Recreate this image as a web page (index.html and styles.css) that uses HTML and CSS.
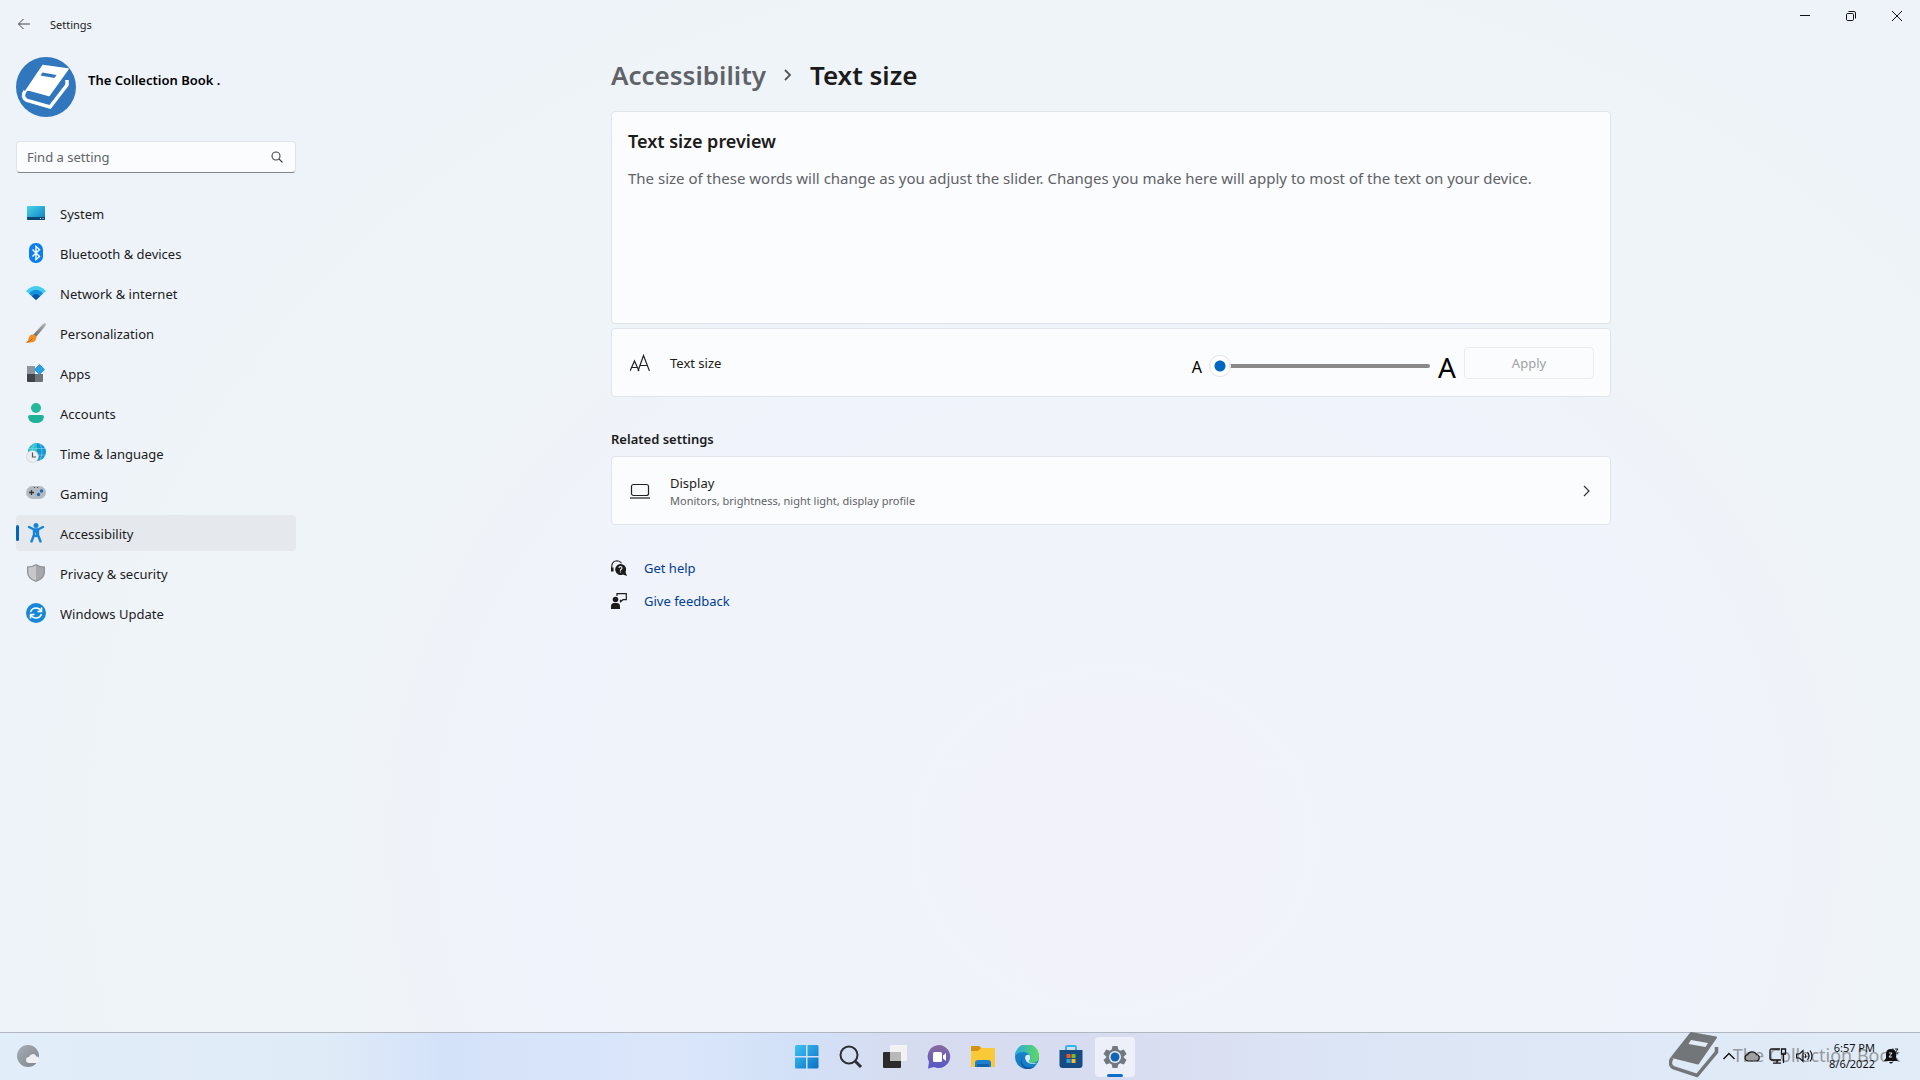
FILE: index.html
```html
<!DOCTYPE html>
<html lang="en">
<head>
  <meta charset="UTF-8">
  <title>Settings</title>
  <link rel="stylesheet" href="styles.css">
</head>
<body>

  <!-- Title bar -->
  <header class="titlebar">
    <button class="back" aria-label="Back">
      <svg width="14" height="12" viewBox="0 0 14 12" fill="none" stroke="#444" stroke-width="1"><path d="M6.500 1 1.500 6l5 5M1.500 6H13"/></svg>
    </button>
    <span class="app-title">Settings</span>
    <div class="window-buttons">
      <button aria-label="Minimize"><svg width="10" height="10" viewBox="0 0 10 10"><path d="M0 4.500h10" stroke="#111"/></svg></button>
      <button aria-label="Restore"><svg width="10" height="10" viewBox="0 0 10 10" fill="none" stroke="#111"><rect x=".5" y="2.500" width="7" height="7" rx="1.200"/><path d="M2.500.5H8q1.500 0 1.500 1.500v5.500"/></svg></button>
      <button aria-label="Close"><svg width="10" height="10" viewBox="0 0 10 10"><path d="M0 0l10 10M10 0 0 10" stroke="#111"/></svg></button>
    </div>
  </header>

  <div class="window">
    <!-- Sidebar -->
    <aside class="sidebar">
      <div class="profile">
        <svg width="60" height="60" viewBox="0 0 60 60">
          <circle cx="30" cy="30" r="30" fill="#3077bd"/>
          <path d="M27 8.500 52 12 33 38.500 13 33 Q11 33 9.500 34.500 Z" fill="#fff" stroke="#fff" stroke-width="1.500" stroke-linejoin="round"/>
          <path d="M26.500 15.500l14 2.500-2 3-14-2.500z" fill="#3077bd"/>
          <path d="M9 34Q5 40 11 43.500L34 50 51 28V23" fill="none" stroke="#fff" stroke-width="3.500"/>
        </svg>
        <strong>The Collection Book .</strong>
      </div>

      <div class="search">
        <input type="text" placeholder="Find a setting" aria-label="Find a setting">
        <svg width="12" height="12" viewBox="0 0 12 12" fill="none" stroke="#444" stroke-width="1.100"><circle cx="5" cy="5" r="4"/><path d="M8 8l3.500 3.500"/></svg>
      </div>

      <nav>
        <a href="#">
          <svg width="20" height="20" viewBox="0 0 20 20"><defs><linearGradient id="gSys" x2="1" y2="1"><stop stop-color="#4bd6e8"/><stop offset="1" stop-color="#0b7cc4"/></linearGradient></defs><rect x="1" y="3" width="18" height="14" rx="1" fill="url(#gSys)"/><path d="M1 14h18v2q0 1-1 1H2q-1 0-1-1z" fill="#0a4a75"/><path d="M14 15.500h1M16.500 15.500h1" stroke="#bfe8ff"/></svg>
          System
        </a>
        <a href="#">
          <svg width="20" height="20" viewBox="0 0 20 20"><rect x="3" width="14" height="20" rx="6.500" fill="#0a7ff2"/><path d="M6.500 6.500l7 7-3.500 3V3.500l3.500 3-7 7" fill="none" stroke="#fff" stroke-width="1.400"/></svg>
          Bluetooth &amp; devices
        </a>
        <a href="#">
          <svg width="20" height="20" viewBox="0 0 20 20"><path d="M0 8Q10-2 20 8L10 17z" fill="#45cdf0"/><path d="M3 10.500Q10 3 17 10.500L10 17z" fill="#1590dc"/><path d="M6 13.200Q10 9 14 13.200L10 17z" fill="#0a55a8"/></svg>
          Network &amp; internet
        </a>
        <a href="#">
          <svg width="20" height="20" viewBox="0 0 20 20"><defs><linearGradient id="gBrush" x1="0" y1="1" x2="1" y2="0"><stop stop-color="#666"/><stop offset="1" stop-color="#b8b8b8"/></linearGradient></defs><path d="M7 12 17 1q2-1.500 3 0 0 1-1 2.500L10 14z" fill="url(#gBrush)"/><path d="M6.500 11.500q3 0 4 3-1 5-5.500 5H.5q2-2 2-4 1-4 4-4z" fill="#f19027"/><path d="M.5 19.500q4-1 6-4" fill="none" stroke="#c75b13"/></svg>
          Personalization
        </a>
        <a href="#">
          <svg width="20" height="20" viewBox="0 0 20 20"><path d="M1 3h8v8H1z" fill="#8f959e"/><path d="M1 11h8v8H2q-1 0-1-1z" fill="#41454a"/><path d="M9 11h8v7q0 1-1 1H9z" fill="#6e737a"/><path d="M13.500 1.500 18.500 6.500 13.500 11.500 8.500 6.500z" fill="#2aa0e4" stroke="#2aa0e4" stroke-linejoin="round"/></svg>
          Apps
        </a>
        <a href="#">
          <svg width="20" height="20" viewBox="0 0 20 20"><circle cx="10" cy="5" r="5" fill="#24b99c"/><path d="M4 12h12q2 0 2 2-1 6-8 6t-8-6q0-2 2-2z" fill="#1fb298"/></svg>
          Accounts
        </a>
        <a href="#">
          <svg width="20" height="20" viewBox="0 0 20 20"><circle cx="11" cy="9" r="9" fill="#1694d2"/><path d="M11 0a9 9 0 0 0-9 9h9z" fill="#2fc4c8"/><path d="M3 5.500h16M3 12h16M8 1Q4 9 8 17M14 1q4 8 0 16" fill="none" stroke="#6fd5ec" stroke-width=".7"/><circle cx="6.500" cy="13.500" r="6" fill="#eceef0" stroke="#c3c8cd" stroke-width=".6"/><path d="M6.500 9.500V14H10" fill="none" stroke="#555" stroke-width="1.200"/></svg>
          Time &amp; language
        </a>
        <a href="#">
          <svg width="20" height="20" viewBox="0 0 20 20"><rect y="3" width="20" height="13" rx="6.500" fill="#b4bac1"/><path d="M5.500 7v5M3 9.500h5" stroke="#333" stroke-width="1.300"/><circle cx="15.500" cy="8" r="1.700" fill="#1f68b8"/><circle cx="12.500" cy="11.500" r="1.700" fill="#1f68b8"/><path d="M8 4.500h1M11 4.500h1" stroke="#444"/></svg>
          Gaming
        </a>
        <a href="#" class="selected" aria-current="page">
          <svg width="20" height="20" viewBox="0 0 20 20" fill="none" stroke="#1583d8" stroke-linecap="round" stroke-linejoin="round"><circle cx="10" cy="2.500" r="2.500" fill="#1583d8" stroke="none"/><path d="M3 4l5 2.500h4L17 4" stroke-width="2.400"/><path d="M8 7.500h4V12l2.500 6.500M8 7.500V12L5.500 18.500M8 12l2 1 2-1" fill="#1583d8" stroke-width="2.400"/></svg>
          Accessibility
        </a>
        <a href="#">
          <svg width="20" height="20" viewBox="0 0 20 20"><path d="M10 1q4 2.500 9 2.500V9q0 7-9 10-9-3-9-10V3.500Q6 3.500 10 1z" fill="#8c8f94"/><path d="M10 2.300v15.500Q2.200 15 2.200 9V4.500Q6.500 4.500 10 2.300z" fill="#c5c7ca"/><path d="M10 2.300v15.500q7.800-2.800 7.800-8.800V4.500Q13.500 4.500 10 2.300z" fill="#a5a7ab"/></svg>
          Privacy &amp; security
        </a>
        <a href="#">
          <svg width="20" height="20" viewBox="0 0 20 20" fill="none" stroke="#fff" stroke-width="1.600"><circle cx="10" cy="10" r="10" fill="#1687d9" stroke="none"/><path d="M4.500 9Q6 5 10 5q3.500 0 5 3M15.500 4.500V8.500h-4M15.500 11q-1.500 4-5.500 4-3.500 0-5-3M4.500 15.500v-4h4"/></svg>
          Windows Update
        </a>
      </nav>
    </aside>

    <!-- Page -->
    <main>
      <div class="content">
        <h1><a href="#">Accessibility</a>
          <svg width="8" height="12" viewBox="0 0 8 12" fill="none" stroke="#555" stroke-width="1.800"><path d="M1 1l5 5-5 5"/></svg>
          <span>Text size</span></h1>

        <section class="card preview">
          <h2>Text size preview</h2>
          <p>The size of these words will change as you adjust the slider. Changes you make here will apply to most of the text on your device.</p>
        </section>

        <section class="card row">
          <svg width="20" height="20" viewBox="0 0 20 20" fill="none" stroke="#222" stroke-width="1.200"><path d="M0 18 4.500 8 9 18M1.500 14.500h6M8 18 13.500 2.500 19.500 18M10 12.500h7.500"/></svg>
          <label for="textSize">Text size</label>
          <div class="slider">
            <span class="small-a">A</span>
            <input type="range" id="textSize" min="100" max="225" value="100">
            <span class="large-a">A</span>
          </div>
          <button class="apply" disabled>Apply</button>
        </section>

        <h3>Related settings</h3>
        <a href="#" class="card row">
          <svg width="20" height="20" viewBox="0 0 20 20" fill="none" stroke="#222" stroke-width="1.200"><rect x="1.500" y="3.500" width="17" height="11" rx="2"/><path d="M0 17h20"/></svg>
          <span class="row-text">Display<small>Monitors, brightness, night light, display profile</small></span>
          <svg width="8" height="12" viewBox="0 0 8 12" fill="none" stroke="#333" stroke-width="1.200"><path d="M1 1l5 5-5 5"/></svg>
        </a>

        <div class="links">
          <a href="#">
            <svg width="16" height="16" viewBox="0 0 16 16"><path d="M1 10.500Q-.5 1 6 .8q3 0 4.500 2.500M0 8h2v3H0z" fill="none" stroke="#1b1b1b" stroke-width="1.100"/><path d="M9.500 4a5.500 5.500 0 0 1 5 8l1.500 4-4-1.500A5.500 5.500 0 1 1 9.500 4z" fill="#1b1b1b"/><path d="M8 8q0-1.500 1.500-1.500T11 8q0 1-1.500 1.800v.9M9.500 11.500v1" fill="none" stroke="#fff" stroke-width="1.100"/></svg>
            Get help
          </a>
          <a href="#">
            <svg width="16" height="16" viewBox="0 0 16 16"><circle cx="4.500" cy="6.500" r="2.800" fill="#1b1b1b"/><path d="M0 16v-2.500Q0 10 3 10h3q3 0 3 3.500V16z" fill="#1b1b1b"/><path d="M6 3V.7h9.300v6H12l-2.500 2V6.700" fill="none" stroke="#1b1b1b" stroke-width="1.200"/></svg>
            Give feedback
          </a>
        </div>
      </div>
    </main>
  </div>

  <!-- Taskbar -->
  <footer class="taskbar">
    <button class="weather" aria-label="Weather">
      <svg width="24" height="24" viewBox="0 0 24 24"><defs><linearGradient id="gMoon" x2="1" y2="1"><stop stop-color="#a7adb4"/><stop offset="1" stop-color="#7d858e"/></linearGradient></defs><circle cx="11" cy="11" r="11" fill="url(#gMoon)"/><path d="M12 18a3 3 0 0 1 0-6 4 4 0 0 1 7.500-.5 3.300 3.300 0 0 1 .5 6.500z" fill="#eef0f4"/></svg>
    </button>

    <div class="task-icons">
      <button aria-label="Start">
        <svg width="24" height="24" viewBox="0 0 24 24"><defs><linearGradient id="gWin" x2="1" y2="1"><stop stop-color="#3fc4f4"/><stop offset="1" stop-color="#0a6fc8"/></linearGradient></defs><path d="M1.500 0H11v11H0V1.500Q0 0 1.500 0zM12.500 0H22q1.500 0 1.500 1.500V11h-11zM0 12.500h11v11H1.500Q0 23.500 0 22zM12.500 12.500h11V22q0 1.500-1.500 1.500h-9.500z" fill="url(#gWin)"/></svg>
      </button>
      <button aria-label="Search">
        <svg width="24" height="24" viewBox="0 0 24 24" fill="none" stroke="#2b2f36"><circle cx="10" cy="10" r="8.500" stroke-width="2"/><path d="M16 16l6 6" stroke-width="3"/></svg>
      </button>
      <button aria-label="Task view">
        <svg width="24" height="24" viewBox="0 0 24 24"><rect y="7" width="18" height="16" rx="1" fill="#2b2b2b"/><rect x="7" width="17" height="16" rx="1" fill="#f2f2f2"/><path d="M7 7h11v9H7z" fill="#b9b9b9"/></svg>
      </button>
      <button aria-label="Chat">
        <svg width="24" height="24" viewBox="0 0 24 24"><defs><linearGradient id="gChat" x2="0" y2="1"><stop stop-color="#8a6a9e"/><stop offset="1" stop-color="#5658c8"/></linearGradient></defs><path d="M12 0a11.500 11.500 0 1 1-5 22L1 23.500 2 17A11.500 11.500 0 0 1 12 0z" fill="url(#gChat)"/><rect x="6" y="7" width="9" height="10" rx="1.500" fill="#fff"/><path d="M16 10.500l3-2.500v8l-3-2.500z" fill="#fff"/></svg>
      </button>
      <button aria-label="File Explorer">
        <svg width="24" height="24" viewBox="0 0 24 24"><path d="M0 2q0-1 1-1h7l3 2h12q1 0 1 1v17q0 1-1 1H1q-1 0-1-1z" fill="#fac937"/><path d="M0 2q0-1 1-1h7l2 2-3 3H0z" fill="#d19410"/><path d="M4 22v-4q0-3 3-3h10q3 0 3 3v4z" fill="#1c7fd0"/><path d="M6 19h12v3H6z" fill="#1262a8"/></svg>
      </button>
      <button aria-label="Edge">
        <svg width="24" height="24" viewBox="0 0 24 24"><defs><linearGradient id="gEdge" x2="1" y2="0"><stop stop-color="#2aa8e2"/><stop offset="1" stop-color="#5edb5c"/></linearGradient></defs><circle cx="12" cy="12" r="12" fill="#167fc9"/><path d="M0 11A12 12 0 0 1 24 11q0 7-7 7-4 0-3-2 2-2 1-5-2-4-7-4-5 0-8 4z" fill="url(#gEdge)"/><path d="M9 9q-5 6 0 11.500 5 4 12 .2A12 12 0 0 1 10 23.800Q2 18 9 9z" fill="#14569c"/><path d="M14.500 10q-4-1-4.500 3 1 6 9 6 2 0 3.500-1-2 .5-5 .3-4-.5-3.500-2.500 2-2 .5-5.800z" fill="#dce8f4"/></svg>
      </button>
      <button aria-label="Store">
        <svg width="24" height="24" viewBox="0 0 24 24"><path d="M7 6V2.500Q7 1 8.500 1h7Q17 1 17 2.500V6" fill="none" stroke="#35b6ea" stroke-width="2"/><path d="M.5 5h23v15q0 3-3 3h-17q-3 0-3-3z" fill="#164a80"/><path d="M7.500 9h4v4h-4z" fill="#f0572b"/><path d="M12.500 9h4v4h-4z" fill="#7dba26"/><path d="M7.500 14h4v4h-4z" fill="#25a6ea"/><path d="M12.500 14h4v4h-4z" fill="#fcbb24"/></svg>
      </button>
      <button class="running" aria-label="Settings">
        <svg width="24" height="24" viewBox="0 0 24 24"><path d="M9.500 1h5l.8 3.500 2 1.200 3.500-1.200 2.700 4.500-2.700 2.500v1L23.500 15l-2.700 4.500-3.500-1.200-2 1.200-.8 3.500h-5l-.8-3.500-2-1.200-3.500 1.200L.5 15l2.700-2.500v-1L.5 9l2.700-4.500 3.500 1.200 2-1.200z" fill="#72787f"/><circle cx="12" cy="12" r="6" fill="#e8f0f8"/><circle cx="12" cy="12" r="4.500" fill="#1266b4"/></svg>
      </button>
    </div>

    <div class="tray">
      <button aria-label="Show hidden icons"><svg width="12" height="8" viewBox="0 0 12 8"><path d="M.5 7 6 1.500 11.500 7" fill="none" stroke="#111" stroke-width="1.400"/></svg></button>
      <button aria-label="OneDrive"><svg width="16" height="12" viewBox="0 0 16 12"><path d="M4 11a3.200 3.200 0 0 1-.5-6.300A5 5 0 0 1 12.500 4.500 3.300 3.300 0 0 1 12.500 11z" fill="#a0a0a0" stroke="#1b1b1b" stroke-width="1.200"/></svg></button>
      <button aria-label="Network"><svg width="18" height="16" viewBox="0 0 18 16" fill="none" stroke="#111" stroke-width="1.300"><path d="M11 1H2.500Q1 1 1 2.500v8Q1 12 2.500 12H12M4 15.200h8M8 12v3M12.500 1h4v5h-4zM14.500 6v9"/></svg></button>
      <button aria-label="Volume"><svg width="18" height="14" viewBox="0 0 18 14" fill="none" stroke="#111" stroke-width="1.100"><path d="M.6 5h2.900L7 1.500v11L3.500 9H.6zM9 5q1.500 2 0 4M11.500 3q3 4 0 8M14 1.500q4 5.500 0 11"/></svg></button>
      <div class="clock"><time>6:57 PM</time><time>8/6/2022</time></div>
      <button aria-label="Notifications"><svg width="16" height="16" viewBox="0 0 16 16"><path d="M7 1Q2 1 2 6v4L0 13h14l-2-3V6Q12 1 7 1zM5 14h4q-2 3-4 0z" fill="#111"/><path d="M5 5h3L5 9h3" fill="none" stroke="#dfeaf7"/><path d="M11 1h3l-3 4h3" fill="none" stroke="#111"/></svg></button>
    </div>

    <div class="watermark">
      <svg width="50" height="46" viewBox="0 0 50 46"><path d="M22 1 47 5.500 29 31.500 3 25z" fill="#737679" stroke="#737679" stroke-width="2" stroke-linejoin="round"/><path d="M22 8l17 3-2.500 4-17-3z" fill="#e4edf7"/><path d="M3 26Q-1 33 5 36L28 43.500 47.500 20V15" fill="none" stroke="#737679" stroke-width="3.500"/></svg>
      The Collection Book
    </div>
  </footer>

</body>
</html>
```

FILE: styles.css
```css
* {
  box-sizing: border-box;
}

body {
  margin: 0;
  min-height: 100vh;
  display: flex;
  flex-direction: column;
  font-family: "Noto Sans", "Open Sans", sans-serif;
  font-size: 13px;
  line-height: 20px;
  color: #1b1b1b;
  background: radial-gradient(ellipse 62% 95% at 58% 78%, #f2f3fa 0%, #f0f3fb 50%, #eff4f8 66%, #eff4f8 80%, #eef3fa 100%);
}

button {
  border: 0;
  padding: 0;
  background: none;
  font: inherit;
  color: inherit;
  display: flex;
  align-items: center;
  justify-content: center;
}

a {
  color: inherit;
  text-decoration: none;
}

svg {
  flex: none;
  display: block;
}

h1, h2, h3, p {
  margin: 0;
  font-weight: 600;
}

/* title bar */
.titlebar {
  display: flex;
  height: 48px;
}

.back {
  width: 48px;
}

.app-title {
  font-size: 11px;
  padding: 15px 0 0 2px;
}

.window-buttons {
  display: flex;
  margin-left: auto;
}

.window-buttons button {
  width: 46px;
  height: 32px;
}

.window {
  flex: 1;
  display: flex;
}

/* sidebar */
.sidebar {
  width: 302px;
  padding: 9px 6px 0 16px;
}

.profile {
  display: flex;
  gap: 12px;
  margin-bottom: 24px;
}

.profile strong {
  font-weight: 600;
  color: #000;
  padding-top: 13px;
}

.search {
  display: flex;
  align-items: center;
  height: 32px;
  padding: 0 12px 0 10px;
  margin-bottom: 22px;
  background: #fbfcfe;
  border: 1px solid #dfe4ea;
  border-bottom-color: #80858a;
  border-radius: 4px;
}

.search input {
  flex: 1;
  min-width: 0;
  border: 0;
  padding: 0;
  outline: 0;
  background: none;
  font: inherit;
}

.search input::placeholder {
  color: #606468;
}

nav {
  display: flex;
  flex-direction: column;
  gap: 4px;
}

nav a {
  display: flex;
  align-items: center;
  gap: 14px;
  height: 36px;
  padding: 2px 0 0 10px;
  border-radius: 4px;
}

nav a svg {
  margin-bottom: 2px;
}

nav .selected {
  position: relative;
  background: #e5e9ee;
}

nav .selected::before {
  content: "";
  position: absolute;
  left: 0;
  top: 10px;
  width: 3px;
  height: 16px;
  border-radius: 2px;
  background: #0067c0;
}

/* page */
main {
  flex: 1;
}

.content {
  max-width: 1000px;
  margin: 0 auto;
}

h1 {
  display: flex;
  align-items: center;
  gap: 18px;
  height: 40px;
  margin: 7px 0 16px;
  font-size: 26px;
  line-height: 40px;
}

h1 a {
  color: #5f6368;
}

.card {
  display: flex;
  background: #fbfcfe;
  border: 1px solid #e0e5ec;
  border-radius: 4px;
}

.preview {
  flex-direction: column;
  height: 213px;
  padding: 16px;
  margin-bottom: 4px;
}

h2 {
  font-size: 18px;
  line-height: 26px;
}

.preview p {
  margin-top: 12px;
  font-size: 15px;
  font-weight: 400;
  line-height: 24px;
  color: #606266;
}

.row {
  align-items: center;
  height: 69px;
  padding: 0 16px 0 18px;
  gap: 20px;
}

.slider {
  display: flex;
  align-items: center;
  gap: 8px;
  margin-left: auto;
  margin-right: -12px;
  padding-top: 6px;
  color: #000;
}

.small-a {
  font-size: 16px;
}

.large-a {
  font-size: 28px;
}

.small-a,
.large-a {
  padding-top: 2px;
}

input[type="range"] {
  appearance: none;
  width: 220px;
  height: 20px;
  margin: 0;
  background: none;
}

input[type="range"]::-webkit-slider-runnable-track {
  height: 4px;
  border-radius: 2px;
  background: #8a8a8a;
}

input[type="range"]::-webkit-slider-thumb {
  appearance: none;
  width: 20px;
  height: 20px;
  margin-top: -8px;
  border-radius: 50%;
  background: radial-gradient(circle, #0067c0 5px, #fff 6px);
  box-shadow: 0 0 0 1px #e8e4ec;
}

.apply {
  width: 130px;
  height: 32px;
  border: 1px solid #e8ebf0;
  border-radius: 4px;
  color: #a0a2a5;
}

h3 {
  margin: 32px 0 7px;
  font-size: 13px;
}

.row-text {
  flex: 1;
}

.row-text small {
  display: block;
  font-size: 11px;
  line-height: 16px;
  color: #606266;
}

a.row {
  padding-right: 19px;
}

.links {
  display: flex;
  flex-direction: column;
  gap: 13px;
  margin-top: 33px;
  color: #003e92;
}

.links a {
  display: flex;
  align-items: center;
  gap: 17px;
}

/* taskbar */
.taskbar {
  position: relative;
  display: grid;
  grid-template-columns: 1fr auto 1fr;
  align-items: center;
  height: 48px;
  border-top: 1px solid #b1b7c1;
  background: linear-gradient(90deg, #e1edf8 0%, #e0ebf8 17%, #d4e2f9 23%, #dbe6fa 35%, #d2e1f8 41%, #d6dcf0 47%, #d8dcf0 58%, #dce5f5 70%, #e1ecf8 100%);
}

.weather {
  width: 24px;
  margin-left: 17px;
}

.task-icons {
  display: flex;
  gap: 4px;
  padding-left: 2px;
}

.task-icons button {
  width: 40px;
  height: 40px;
}

.task-icons .running {
  position: relative;
  border-radius: 4px;
  background: #edf0f9;
}

.running::after {
  content: "";
  position: absolute;
  bottom: 0;
  left: 12px;
  width: 16px;
  height: 3px;
  border-radius: 2px;
  background: #0b6fc7;
}

.tray {
  position: relative;
  z-index: 1;
  display: flex;
  align-items: center;
  justify-content: flex-end;
  gap: 9px;
  padding: 0 20px 2px 0;
  color: #111;
}

.clock {
  display: flex;
  flex-direction: column;
  align-items: flex-end;
  font-size: 11px;
  line-height: 16px;
  margin-left: 6px;
}

/* channel mark over the tray */
.watermark {
  position: absolute;
  right: 20px;
  top: -1px;
  display: flex;
  align-items: center;
  gap: 14px;
  font-size: 18px;
  color: #96999e;
  pointer-events: none;
}
```
